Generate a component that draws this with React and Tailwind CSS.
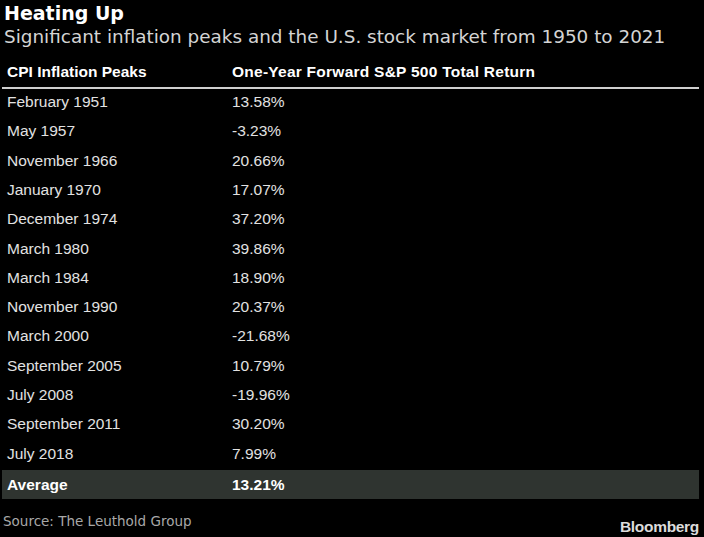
import React from 'react'

const rows = [
  ['February 1951', '13.58%'],
  ['May 1957', '-3.23%'],
  ['November 1966', '20.66%'],
  ['January 1970', '17.07%'],
  ['December 1974', '37.20%'],
  ['March 1980', '39.86%'],
  ['March 1984', '18.90%'],
  ['November 1990', '20.37%'],
  ['March 2000', '-21.68%'],
  ['September 2005', '10.79%'],
  ['July 2008', '-19.96%'],
  ['September 2011', '30.20%'],
  ['July 2018', '7.99%'],
]

export default function App() {
  return (
    <div className="h-[537px] w-[704px] overflow-hidden bg-black text-[#e2e2e2]">
      <div className="px-[4px] pt-[1px] font-['DejaVu_Sans',sans-serif]">
        <div className="text-[19px] font-bold leading-[24px] text-white">Heating Up</div>
        <div className="text-[18.4px] leading-[24px] text-[#d4d4d4]">
          Significant inflation peaks and the U.S. stock market from 1950 to 2021
        </div>
      </div>

      <div className="mx-[2px] mt-[14px] w-[697px] font-['Liberation_Sans',Arial,sans-serif] text-[15.5px]">
        <div className="flex h-[26px] items-start border-b-2 border-[#cfcfcf] pb-[6px] font-bold leading-[18px] text-white">
          <div className="w-[230px] pl-[5px]">CPI Inflation Peaks</div>
          <div className="tracking-[0.25px]">One-Year Forward S&amp;P 500 Total Return</div>
        </div>
        <div className="-mt-[2px]">
          {rows.map(([date, ret]) => (
            <div key={date} className="flex h-[29.3px] items-center">
              <div className="w-[230px] pl-[5px]">{date}</div>
              <div>{ret}</div>
            </div>
          ))}
        </div>
        <div className="mt-[2px] flex h-[29px] items-center bg-[#2f3430] font-bold text-white">
          <div className="w-[230px] pl-[5px]">Average</div>
          <div>13.21%</div>
        </div>
      </div>

      <div className="mt-[12px] flex items-end justify-between pl-[3px] pr-[5px]">
        <div className="font-['DejaVu_Sans',sans-serif] text-[13.5px] text-[#a8a8a8]">
          Source: The Leuthold Group
        </div>
        <div className="translate-y-[4px] font-['Liberation_Sans',Arial,sans-serif] text-[15.5px] font-bold leading-[16px] tracking-[-0.02em] text-[#dcdcdc]">
          Bloomberg
        </div>
      </div>
    </div>
  )
}
